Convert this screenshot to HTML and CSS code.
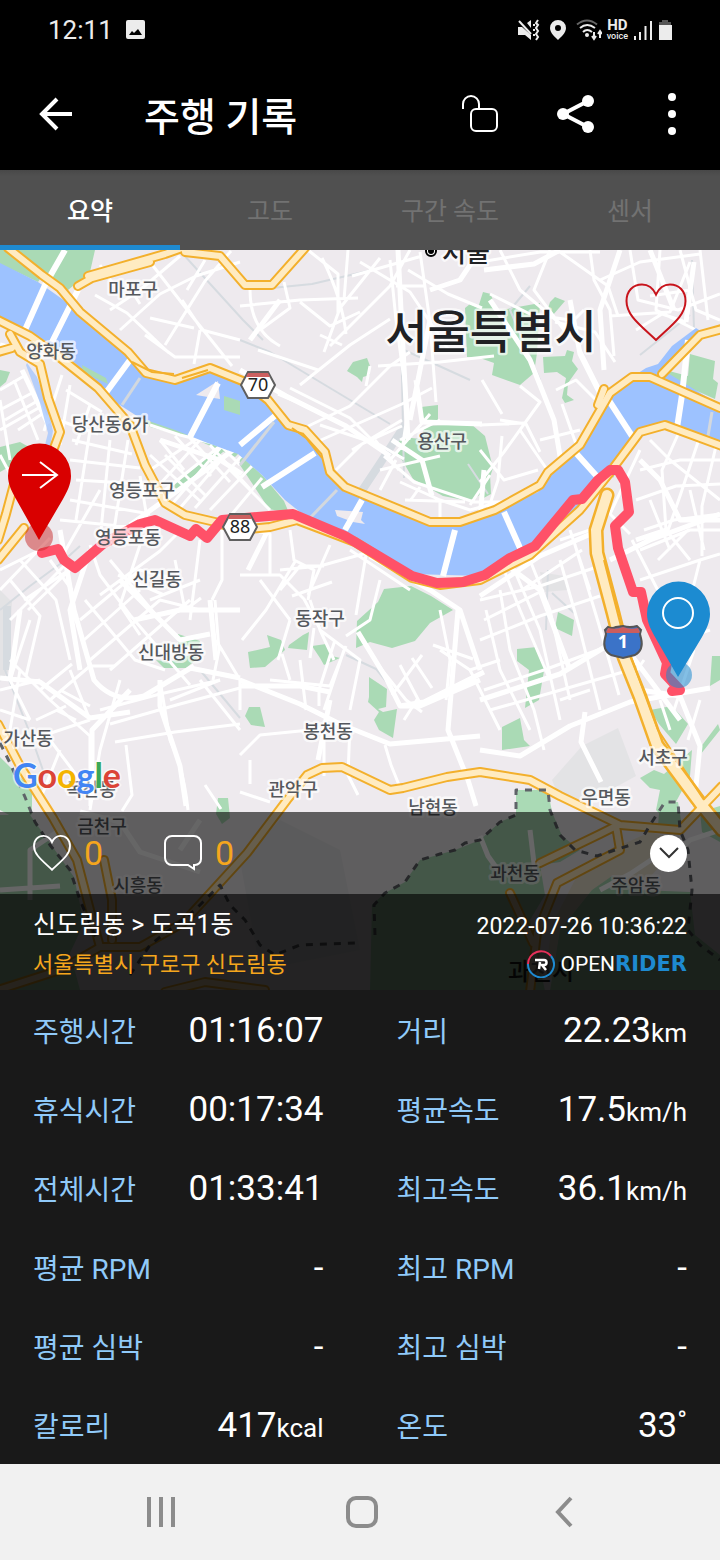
FILE: index.html
```html
<!DOCTYPE html>
<html lang="ko">
<head>
    <meta charset="UTF-8">
    <meta name="viewport" content="width=device-width, initial-scale=1.0">
    <title>주행 기록</title>
    <link rel="stylesheet" href="styles.css">
</head>
<body>
    <div class="status-bar">
        <span class="clock">12:11</span>
        <svg class="photo-icon" width="20" height="20" viewBox="0 0 20 20"><rect x="0" y="0" width="19" height="19" rx="2" fill="#ececec"/><path d="M3 15l3-4 2 2 4-4 4 6z" fill="#000"/></svg>
        <div class="status-icons">
            <svg width="22" height="22" viewBox="0 0 22 22"><path d="M0 8h4l9 8v5l-6-5H0zM9 4l4-3v8z" fill="#ececec"/><path d="M1 2l12 13" stroke="#ececec" stroke-width="2"/><path d="M20 1l-2 3 2 2-2 3 2 3-2 3 2 3-2 3M16 5v2M16 10v2M16 15v2" stroke="#ececec" stroke-width="2" fill="none"/></svg>
            <svg width="16" height="22" viewBox="0 0 16 22"><path fill-rule="evenodd" d="M8 1a8 8 0 0 0-8 8c0 5 5 9 8 12 3-3 8-7 8-12a8 8 0 0 0-8-8zm0 5a3 3 0 1 1 0 6 3 3 0 0 1 0-6z" fill="#ececec"/></svg>
            <svg width="26" height="22" viewBox="0 0 26 22"><g fill="none" stroke-width="2"><path d="M1 5.500q10-8 20 0" stroke="#666"/><path d="M4 9q7-6 15 0M7 13q4-4 9 0" stroke="#ececec"/><path d="M18 13v7m-2-3l2 3 2-3M24 19v-7m-2 3l2-3 2 3" stroke="#ececec"/></g><circle cx="11" cy="16" r="2" fill="#ececec"/></svg>
            <div class="hd"><span>HD</span><small>voice</small></div>
            <svg width="20" height="22" viewBox="0 0 20 22"><path d="M2 17v4M7 13v8M12.500 7v14M18 2v19" stroke="#ececec" stroke-width="2"/></svg>
            <svg width="14" height="22" viewBox="0 0 14 22"><path d="M4 1h6v2h3v4H1V3h3z" fill="#555"/><path d="M1 6h13v15H1z" fill="#ececec"/></svg>
        </div>
    </div>

    <header class="app-bar">
        <button class="back" aria-label="뒤로">
            <svg width="34" height="34" viewBox="0 0 34 34" fill="none" stroke="#fff" stroke-width="4"><path d="M33 17H4M18 2L3 17l15 15"/></svg>
        </button>
        <h1>주행 기록</h1>
        <button class="action" aria-label="잠금 해제">
            <svg width="38" height="38" viewBox="0 0 38 38" fill="none" stroke="#fff" stroke-width="2"><path d="M2 14V9a8 8 0 0 1 16 0v5"/><rect x="10" y="14" width="26" height="22" rx="5"/></svg>
        </button>
        <button class="action" aria-label="공유">
            <svg width="40" height="40" viewBox="0 0 40 40" fill="#fff"><path d="M32 7L7 20l25 13" fill="none" stroke="#fff" stroke-width="4"/><circle cx="7" cy="20" r="6"/><circle cx="32" cy="7" r="6"/><circle cx="32" cy="33" r="6"/></svg>
        </button>
        <button class="action" aria-label="더보기">
            <svg width="10" height="44" viewBox="0 0 10 44" fill="#fff"><circle cx="5" cy="5" r="4"/><circle cx="5" cy="22" r="4"/><circle cx="5" cy="39" r="4"/></svg>
        </button>
    </header>

    <nav class="tabs">
        <button class="tab active">요약</button>
        <button class="tab">고도</button>
        <button class="tab">구간 속도</button>
        <button class="tab">센서</button>
    </nav>

    <main>
        <section class="stage">
            <svg class="map" viewBox="0 250 720 740" role="img" aria-label="주행 경로 지도">
                <rect class="land" y="250" width="720" height="740"/>

                <!-- airport, campus and base areas -->
                <g class="area">
                    <path d="M552 780l30-34 36-18 18 48-40 22-36 2zM540 572l24 4 4 14-24 2zM0 590l12 12-4 70-8 10z"/>
                    <path d="M400 900l20-20 40 10-20 60-50 30zM240 860l40-40 60 30 20 100-100 20z"/>
                    <path class="sand" d="M610 850l40-18 14 4-4 30-20 22-30 0-26 24 4 60-30 20-12-24 6-44 24-46z"/>
                </g>

                <!-- parks -->
                <g class="park">
                    <path d="M8 250H95L90 272 68 290 42 276 38 282 0 264V250z"/>
                    <path d="M347 371l6-9 14-4 3 8v9l-7 2-1 5-5-5zM421 407l17-2v15h-17z"/>
                    <path d="M425 426l46-2 14 12 8 32-8 24-16 9-26-5-30-17-8-14-8-13 5-4-5-6 7-5 16 2z"/>
                    <path d="M465 308l5-4 8 4 5-16 8 2 5 17 44-8-3 50-3 20-14 12-28-10 2-12-14-5-13-1zM550 302l5-5 10 4-12 14-6-3z"/>
                    <path d="M543 357l22-1 2-6 7 2-2 9 6 8-10 14-1 12 7 5-9 3-3-5 4-20-9-6-13 1z"/>
                    <path d="M690 354l25 7-2 18 5 4-3 16-52-23 6-5 19 5zM607 466l18-10-12 22z"/>
                    <path d="M480 434l9 20 2 40-11 6z"/>
                    <path d="M140 415l40 16 40 7 20 14-5 5-40-18-45-12zM173 486l46-38 4 4-46 38zM0 370l10 2-4 10-6 5zM0 447l20-5 18 10-20 10-18 10zM240 455l24 22 20 24 5 12-20-4-29-44z"/>
                    <path d="M178 634l22 7-2 8-20-5zM156 660l14 2 20-7 8 3-12 10-22 0zM0 757l32 32 0 25-10 8-22-12z"/>
                    <path d="M357 621l21-19 6-13 27-3 20 10 22 14-23 13-15 18-23 7-22-6-14 6z"/>
                    <path d="M248 652l22-5-3-12 14 5 4 10-20 17-15 1zM289 645l14-10 6-3-2 18-19-2zM312 646l14-2 6 12 8 2-16 7-4-7zM245 716l4-9h11l5 20-14-2zM369 677l18 12-1 18-8 2 5 3 14-3-4 29-14-8-5-10 5-8-11-10 1-5z"/>
                    <path d="M558 612l16 8-2 16-17-8zM517 649l20-2 2 8 6 10-6 35-14 8 4-38-12-9zM502 727l18-9 4 22 6 6-28 4z"/>
                    <path d="M650 710l22-4 16 18-12 20-17-20zM640 778l14-8 10 4 28-24-2 26-24 44-10-10 4-20-10-2zM712 656l8 0v24l-10 6zM700 748l18-24 2 6-20 25z"/>
                    <path d="M218 798h10l2 20-8 6-6-10z"/>
                    <path d="M516 790H548L552 812 562 836 580 850 560 862 540 865 545 895 530 920 545 991H370L372 905 385 893 405 882 420 860 455 850 480 840 500 822 516 815z"/>
                    <path d="M592 890L612 876 640 890 690 892 695 935 720 955V991H550L560 930z"/>
                    <path d="M660 802h18l4 24h-24zM0 815l30 0 44 62 10 46-14 30 10 37H0zM700 812l20-6v36l-18-10z"/>
                </g>

                <!-- rail lines -->
                <g class="rail">
                    <path d="M183 254l60 66 20 20M272 288l40-4 60-14M240 340l30 12 60 36 60 36M488 494l-20-30M470 380l-66-30M400 278l4 200"/>
                    <path d="M0 610l30-24 30-22 20-18M5 612v58l26 66 14 40M346 655l30 14 16 20M540 380l-30-70 20-24M548 570l-2 60M552 593l22 20M692 260l2 70M640 355l50-40M200 670l40 48"/>
                    <path class="yard" d="M405 425l-26 40-20 30M7 606v64"/>
                </g>

                <!-- local streets -->
                <g class="minor">
                    <path d="M150 262l42 54 40 50M110 310l30-20 40-34M95 295l32 18 42 40M120 330l40-36 36-18 44-14M165 345l40-64 26-30M182 300l20 30 38 10M200 330l-6 34M150 318l44 10M126 282l14 22M205 260l-18 30M145 335l30 22 65 0M100 265l14 20"/>
                    <path d="M250 290q0 40 30 56M240 306l60-6 58-2M260 330l30-22-6-26M322 258q20 40 24 76M300 302l30 24 30-14M348 250l-4 50M380 258l-40 50-16 44M360 262l50 30 40 60M352 276l70-20M330 346l60-60 20-36M258 350l60 20M300 385l50-40 40-26M370 366l-4 20M378 366l62-4 54-6M390 260l6 60 12 90-6 40M420 252l10 70 6 80M308 250l30 24 0 40M396 286l30 0M408 270l40 24 34 14M320 335l22 10"/>
                    <path d="M290 388l60 30 40 40M300 430l50-24 40-40 20-14M312 444l90-40 30-16M320 425l60 20 24 14M336 470l26-26 40-18M278 394l24 10M352 450l50-30M400 440l40-20M390 460l40-46M380 470l60-14M375 440l24 30"/>
                    <path d="M384 456l30 26 60 20 30 0M400 482l40 18 30 10 30-8M420 487l-10 14M440 502v18M396 460l-16 30M405 500l60 2M470 505l20-30"/>
                    <path d="M480 262l60-10 60 0M500 250l20 40 60 50M550 250l-16 40 30 40 20-20M490 294l40 20 40 6M560 252l48 34 10 30M590 250l4 30 16 30 4 46M600 280l40-18 60-8M630 250l8 50 40 10 42-16M660 250l-4 60 40 20M680 250l16 60 24 10M610 316l60-4 20-50M690 290l-40 6M700 250l8 70M555 322l40 10 20 30M520 386l20 16-36 50-24 30M500 420l26 4 14 28M480 425l44-2M482 380l20 34M562 404l14 40M580 350l30 60M556 390l20-10 20 20M540 440l40-10M480 450l24 30 34-10M520 430l26 38M488 510l10-30 4-44M636 330l26-16 24 8"/>
                    <path d="M640 450l-30 64 20 20M650 440l20 20 50 40M680 430l-18 40 4 60 24 30M700 436l-20 60-14 40M716 446l-14 60 0 50M640 470l40-10 40 0M636 500l40-14 44-2M644 530l30-10 46-6M640 550l50-20M650 500l20 50M632 540l36 70M658 560l30-30 32 0M640 580l60-20 20-6M700 560l-10 40M690 490l14 60"/>
                    <path d="M0 390l24-14M0 410l32-17M5 420l34-20M0 430l42-24M14 380l24 60M0 400l10 60M18 430l24-16M62 375l-18 56M70 385l-10 60M90 405l-14 40M66 390l36 22M58 420l40 14M72 440l60 14M70 460l70 8M76 480l66 4M90 430l-14 90M110 440l-10 100M128 440l-14 90M70 500l80 14M60 520l100 10M140 476l10 60M60 560l40-70M0 455l16 30"/>
                    <path d="M150 425l30 10 40 10 20 20M150 470l90-60M165 490l80-64M180 508l60-70M160 440l24 30M175 436l36 40M190 438l40 44M210 445l40 44M165 455l40 40M150 455l50 46M200 440l-40 44M222 446l-50 58M245 452l-50 56M252 466l-42 44M262 478l-30 36M230 470l40 40"/>
                    <path d="M0 590l50-52M10 620l60-60M0 570l40-20M28 610l48-46M20 560l36 40 14 60M50 560l22 30M10 580l30 36-14 60M24 600l90-60M90 545l10 30 30 40 60 70M100 595l60-44 20-20M80 620l60-50 40 10M84 640l56-50M90 660l70-60 40 10M110 670l80-70M85 600l50 60 30 10M110 560l50 60M118 575l46 20M140 545l-20 60 20 30M150 600l50-20M175 560l10 50 16-12M200 540l-10 80M222 530l0 50-10 20M215 600l4 50-6 30M170 700l50-20M216 640l24 40 0 30"/>
                    <path d="M10 660l40 40 40 36 0 70M0 690l40-10M20 670l-10 60M30 620l-20 60 20 40M0 710l30 10M36 720l30-14M50 700l40-34 24 0M60 690l30 16M56 710l20 10M70 670l20 50M40 690l32-26M30 740l60-20M50 740l30 40M100 710l60-16 60-14M110 724l70-20 60-16M115 742l60-10 65-8M120 680l-20 70-10 60M126 745l6 50-10 16M160 680l10 60q14 30 18 70M200 680l40 50M60 750l-20 50 20 20M205 785l16 24"/>
                    <path d="M250 530l20 4v40M290 530l4 30 20 10-6 30M330 545l-22 50M280 570l40-4 50-14M296 560l-30 50-24 30M260 580l30 40M240 575l40 0 24 24 16 30M280 590l20-24 24 0M310 600l10 30 14 30M332 582l-40 14M366 555l-10 60M350 550l60 40M380 580l-10 40-24 16M320 630l40 30-10 50M290 620l-12 40M314 628l-4 30M335 640l-16 50 0 16M362 640l20 30 24 30 16 12M290 680l-8-26M270 680l60 6 16-40M300 660l6 50M344 650l-20 60M400 665l20 38M412 658l20 30M422 655l-30 40M404 720l14-22M440 610l10 50-4 40M440 650l30 20 30-10M433 645l40 14M240 755l20-20 60-6M350 725l-2 50 10 20M385 745l6 20 8 20M324 736l0 40M250 760l0 24M240 792l30 10"/>
                    <path d="M480 600l60-14 60-20M484 620l60-30M480 640l60-24 60-20M484 690l60-20 70-26M490 710l50-14 90-26M500 560l20 50 30 70M510 560l30 70 20 90M530 560l20 50 20 90M560 560l20 70 20 80M575 545l24 80 20 70M500 590l10 60 24 60 10 40M486 610l14 60 30 60M570 530l20 60M560 540l30-10M582 550l-60 40M470 670l30 60M560 700l30-10M630 680l14-20M680 640l30-10M694 650l-20 60M700 700l-12 40M660 700l10 30"/>
                </g>
                <g class="major">
                    <path d="M240 370l46 26 60 30 44 30M280 300l-30 40M398 250l4 80 6 110M430 320l-14 70-6 30M392 440l30 20 10 36M416 380l6 42 60 2M480 250l-20 30-30 10"/>
                    <path d="M484 270l50-6 26-14M490 300l40 60 24 60 10 60M570 300l10 54 20 40M620 250l-20 60 4 60M480 520l4-50M650 250l24 60M694 262l-8 60"/>
                    <path d="M60 530l14 80 20 70q20 24 50 16l50-30M0 678l40 4 50 36 40-6M20 610l-10 70M90 550l-20 60 10 60M130 690l-38 40 0 70M120 580l60 60 30-6M134 620l46-10 60 0M160 680l0 26 20 60 6 40M210 600l6 60M190 668l50 10"/>
                    <path d="M240 680l60 24 40 20 50 20 90-8M240 686l60 0 30 6M330 700l-12 60M358 632l28 46 14 28 24 -4M370 556l60 34 30 20 20 60M458 610l-10 120 20 50 8 26M424 702l60-30M268 530l-20 40M400 706l20 0 60-26"/>
                    <path d="M600 530l-60 26-60 40M480 700l80-26 50-30M480 750l40 6 50-30 60-24 80-14M500 560l40 30 30 80M640 690l40 6 20 50-6 60M610 560l40-20 70-26M636 540l30-10M585 712l-4 30 20 40M620 640l60 80M700 600l-50 16"/>
                    <path d="M480 836l8 20 10 14M530 830l6 50M600 890l30-16 30-20M660 870l30-30 30-10M80 812l40 10 20 30 60 20M30 900l0-50 30-20M0 890l60-4M180 850l20-30"/>
                    <path d="M240 445l-60 44-50 36M0 345l30 8M22 370l26 54M160 440l60 20 22 14M640 460l20 20 20 40 40 0"/>
                </g>

                <!-- Han river -->
                <path class="water" d="M0 263L38 282 58 296 80 312 128 352 148 376 178 382 212 368 245 384 268 400 288 425 305 430 325 452 330 472 345 487 430 524 475 520 538 492 552 470 582 444 610 396 632 377 646 368 658 364 672 346 696 328 702 332 666 372 720 405V444L665 425 640 428 612 468 580 505 528 552 480 576 412 574 350 540 300 512 285 500 262 475 238 454 205 442 175 430 140 418 112 400 76 364 50 343 0 320z"/>
                <path class="water" d="M27 363l10 14 10 28 6 26-3 16-6 2 4-16-8-30-14-38z" fill-opacity=".7"/>
                <path class="park" d="M82 365l24 13 2 6-25-12zM224 396l16 5v14l-16-5z"/>
                <path class="land" d="M196 395l22-14 2 18zM335 510l28 2-2 8 4 4-12-2-16-6z"/>

                <!-- bridges -->
                <g class="bridge">
                    <path d="M65 250L45 285 25 330M78 290L52 342M130 360L105 394M218 383L190 437M282 410L240 445M315 453L262 487M362 500L345 530M455 530L443 576M504 512L520 548M575 452L602 482M606 396L632 436M688 340L682 395 677 428"/>
                    <path class="rail-bridge" d="M140 378L122 405M274 422L240 465M337 490L310 518M712 412L708 436"/>
                </g>

                <!-- expressways: casing, then fill -->
                <g class="casing">
                    <path d="M8 248L42 275 60 288 80 312 128 352 146 373 175 380 210 368 245 382 268 400 288 425 305 430 325 452 330 472 345 487 430 522 460 522 495 510 540 485 548 472 580 445 610 393 632 377 650 377 720 408"/>
                    <path d="M662 374L700 335 722 329M598 405l6-16"/>
                    <path d="M88 276L165 254 182 248M78 286L92 278 150 262M185 252L220 256 245 285 272 285 305 248"/>
                    <path d="M-2 320L30 336 58 356 98 388 130 425 145 465 165 503 185 515 215 522 240 530 270 527 297 520 355 542 412 578 440 585 480 580 530 555 580 510 608 475 640 432 665 425 722 446"/>
                    <path d="M10 334l10 18 20 12 8 34 12 34-6 16M-2 352l14-4M14 484l-8 30-8 26M24 528L-2 560"/>
                    <path class="wide" d="M607 495L596 530 597 553 613 613 624 657 640 697 657 745 703 807 722 830"/>
                    <path d="M-2 724L20 766 53 818 77 860 90 910 100 947 140 947 183 923 247 853 287 800 307 775 322 768 342 767 390 790 403 788 447 777 480 772 530 780 560 796 620 825 680 830 722 786"/>
                    <path d="M540 863L600 834 616 826 620 850 557 883 537 933 530 992M510 893l23 50M100 947L60 970-2 990M104 860l8 40 0 40M165 992l40-10 60 8"/>
                </g>
                <g class="filling">
                    <path d="M8 248L42 275 60 288 80 312 128 352 146 373 175 380 210 368 245 382 268 400 288 425 305 430 325 452 330 472 345 487 430 522 460 522 495 510 540 485 548 472 580 445 610 393 632 377 650 377 720 408"/>
                    <path d="M662 374L700 335 722 329M598 405l6-16"/>
                    <path d="M88 276L165 254 182 248M78 286L92 278 150 262M185 252L220 256 245 285 272 285 305 248"/>
                    <path d="M-2 320L30 336 58 356 98 388 130 425 145 465 165 503 185 515 215 522 240 530 270 527 297 520 355 542 412 578 440 585 480 580 530 555 580 510 608 475 640 432 665 425 722 446"/>
                    <path d="M10 334l10 18 20 12 8 34 12 34-6 16M-2 352l14-4M14 484l-8 30-8 26M24 528L-2 560"/>
                    <path class="wide" d="M607 495L596 530 597 553 613 613 624 657 640 697 657 745 703 807 722 830"/>
                    <path d="M-2 724L20 766 53 818 77 860 90 910 100 947 140 947 183 923 247 853 287 800 307 775 322 768 342 767 390 790 403 788 447 777 480 772 530 780 560 796 620 825 680 830 722 786"/>
                    <path d="M540 863L600 834 616 826 620 850 557 883 537 933 530 992M510 893l23 50M100 947L60 970-2 990M104 860l8 40 0 40M165 992l40-10 60 8"/>
                </g>
                <path class="median" d="M132 362l20 10 22 2M182 378l26-8M292 428l14 10 16 20M604 560l20 78 34 92 46 70"/>

                <!-- district borders -->
                <g class="border">
                    <path d="M0 743L10 763 25 797 35 822 50 845 70 870 80 900 97 940M130 975L150 945 195 910 220 885 230 905 245 920 260 945 275 955 300 945 355 943"/>
                    <path d="M375 935L374 905 385 893 405 882 420 860 440 854 455 850 465 843 480 840 500 822 516 815V790H548L550 810 560 835 575 850 597 856 615 850 640 842 650 825 665 802H678L680 830 688 850 692 890 688 930 700 945 720 960"/>
                </g>

                <!-- ridden route -->
                <path class="route" d="M42 553L58 549 64 560 75 568 103 544 140 524 155 520 190 536 196 529 207 538 222 520 293 514 345 536 412 576 437 583 463 582 485 575 510 558 535 546 573 500 582 499 598 480 610 470H618L625 482 629 512 615 526 618 548 633 592 641 592 647 620 667 663 665 674 680 690 672 691"/>

                <!-- place labels -->
                <g class="labels">
                    <text x="133" y="296">마포구</text>
                    <text x="51" y="358">양화동</text>
                    <text x="110" y="431">당산동6가</text>
                    <text x="142" y="497">영등포구</text>
                    <text x="128" y="544">영등포동</text>
                    <text x="157" y="586">신길동</text>
                    <text x="171" y="659">신대방동</text>
                    <text x="442" y="448">용산구</text>
                    <text x="320" y="625">동작구</text>
                    <text x="328" y="738">봉천동</text>
                    <text x="293" y="796">관악구</text>
                    <text x="433" y="814">남현동</text>
                    <text x="663" y="764">서초구</text>
                    <text x="606" y="804">우면동</text>
                    <text x="28" y="745">가산동</text>
                    <text x="91" y="796">독산동</text>
                    <text x="102" y="833">금천구</text>
                    <text x="138" y="892">시흥동</text>
                    <text x="515" y="880">과천동</text>
                    <text x="636" y="892">주암동</text>
                    <text class="town" x="541" y="980">과천시</text>
                    <text class="capital" x="466" y="262">서울</text>
                    <text class="city" x="491" y="348">서울특별시</text>
                </g>
                <circle cx="431" cy="251" r="5" fill="#fff" stroke="#000" stroke-width="2"/>
                <circle cx="431" cy="251" r="3"/>

                <!-- road shields -->
                <g class="shield">
                    <path d="M248 372h20l7 13-7 13h-20l-7-13z"/><path class="top" d="M248 373h20l2 4h-24z"/>
                    <text x="258" y="391">70</text>
                    <path d="M230 514h20l7 13-7 13h-20l-7-13z"/><path class="top" d="M230 515h20l2 4h-24z"/>
                    <text x="240" y="533">88</text>
                </g>
                <path d="M608 627q4 2 8 0 7-1 7-1 7 2 14 0l4 4q-2 4 0 8 3 12-6 17l-12 3-12-3q-9-5-6-17 2-4 0-8z" fill="#3b73c8" stroke="#555" stroke-width="2"/>
                <path d="M608 628q8 2 15-1 7 3 15 1l2 4-1 1h-32l-1-1z" fill="#cc5d5d"/>
                <text class="shield-one" x="623" y="648">1</text>

                <!-- start and finish pins -->
                <circle cx="39" cy="537" r="14" fill="#c82828" fill-opacity=".5"/>
                <path d="M8 476a31 32 0 0 1 63 0c0 8-4 16-8 23L39 540 16 499c-4-7-8-15-8-23z" fill="#d90000"/>
                <path d="M22 475h35M40 462l17 13-17 13" fill="none" stroke="#fff" stroke-width="2"/>
                <circle cx="679" cy="675" r="13" fill="#1e8ad0" fill-opacity=".55"/>
                <path d="M647 614a31 32 0 0 1 63 0c0 8-4 16-8 23l-24 40-23-40c-4-7-8-15-8-23z" fill="#1c8bd1"/>
                <circle cx="678" cy="613" r="15" fill="none" stroke="#fff" stroke-width="2"/>

                <text class="google" x="13" y="788"><tspan fill="#4285f4">G</tspan><tspan fill="#db4437">o</tspan><tspan fill="#f4b400">o</tspan><tspan fill="#4285f4">g</tspan><tspan fill="#3ba757">l</tspan><tspan fill="#db4437">e</tspan></text>
            </svg>

            <button class="favorite" aria-label="즐겨찾기">
                <svg width="62" height="59" viewBox="0 0 62 59" fill="none" stroke="#c8141c" stroke-width="2"><path d="M31 11.500C28 5 23 1.500 17 1.500 8 1.500 1.500 8 1.500 18c0 14 12.500 23 29.500 39C48 41 60.500 32 60.500 18 60.500 8 54 1.500 45 1.500 39 1.500 34 5 31 11.500z"/></svg>
            </button>

            <div class="overlay">
                <div class="reactions">
                    <button class="reaction">
                        <svg width="38" height="36" viewBox="0 0 62 59" fill="none" stroke="#fff" stroke-width="3"><path d="M31 11.500C28 5 23 1.500 17 1.500 8 1.500 1.500 8 1.500 18c0 14 12.500 23 29.500 39C48 41 60.500 32 60.500 18 60.500 8 54 1.500 45 1.500 39 1.500 34 5 31 11.500z"/></svg>
                        <span>0</span>
                    </button>
                    <button class="reaction">
                        <svg width="38" height="36" viewBox="0 0 38 36" fill="none" stroke="#fff" stroke-width="2"><path d="M8 1h22a7 7 0 0 1 7 7v16a6 6 0 0 1-6 6h-1v4l-6-4H8a7 7 0 0 1-7-7V8a7 7 0 0 1 7-7z"/></svg>
                        <span>0</span>
                    </button>
                    <button class="collapse" aria-label="접기">
                        <svg width="20" height="12" viewBox="0 0 20 12" fill="none" stroke="#333" stroke-width="2"><path d="M1 1l9 9 9-9"/></svg>
                    </button>
                </div>
                <div class="ride">
                    <div>
                        <h2>신도림동 &gt; 도곡1동</h2>
                        <p class="address">서울특별시 구로구 신도림동</p>
                    </div>
                    <div class="ride-meta">
                        <time datetime="2022-07-26T10:36:22">2022-07-26 10:36:22</time>
                        <div class="brand">
                            <svg width="28" height="28" viewBox="0 0 28 28" fill="none"><circle cx="14" cy="14" r="13" fill="#191919" fill-opacity=".5"/><path d="M1 14a13 13 0 0 1 23-8" stroke="#e8305a" stroke-width="2"/><path d="M24 6a13 13 0 1 1-23 8" stroke="#1e8ad0" stroke-width="2"/><path d="M8 10h9a2.500 2.500 0 0 1 0 5h-2l4 5M13 12l-1 7" stroke="#fff" stroke-width="2.500"/></svg>
                            <span class="open">OPEN</span><b>RIDER</b>
                        </div>
                    </div>
                </div>
            </div>
        </section>

        <dl class="stats">
            <div><dt>주행시간</dt><dd>01:16:07</dd></div>
            <div><dt>거리</dt><dd>22.23<small>km</small></dd></div>
            <div><dt>휴식시간</dt><dd>00:17:34</dd></div>
            <div><dt>평균속도</dt><dd>17.5<small>km/h</small></dd></div>
            <div><dt>전체시간</dt><dd>01:33:41</dd></div>
            <div><dt>최고속도</dt><dd>36.1<small>km/h</small></dd></div>
            <div><dt>평균 RPM</dt><dd>-</dd></div>
            <div><dt>최고 RPM</dt><dd>-</dd></div>
            <div><dt>평균 심박</dt><dd>-</dd></div>
            <div><dt>최고 심박</dt><dd>-</dd></div>
            <div><dt>칼로리</dt><dd>417<small>kcal</small></dd></div>
            <div><dt>온도</dt><dd>33<small class="degree">°</small></dd></div>
        </dl>
    </main>

    <footer class="nav-bar">
        <button aria-label="최근 앱"><svg width="30" height="32" viewBox="0 0 30 32" stroke="#8c8c8c" stroke-width="4"><path d="M3 1v30M15 1v30M27 1v30"/></svg></button>
        <button aria-label="홈"><svg width="32" height="32" viewBox="0 0 32 32" fill="none" stroke="#8c8c8c" stroke-width="4"><rect x="2" y="2" width="28" height="28" rx="8"/></svg></button>
        <button aria-label="뒤로 가기"><svg width="20" height="32" viewBox="0 0 20 32" fill="none" stroke="#8c8c8c" stroke-width="4"><path d="M18 2L5 16l13 14"/></svg></button>
    </footer>
</body>
</html>
```

FILE: styles.css
```css
* { margin: 0; padding: 0; box-sizing: border-box; }
body { background-color: #191919; color: white; font-family: Roboto, "Noto Sans CJK KR", sans-serif; }
button { background: none; border: none; color: inherit; font-family: inherit; cursor: pointer;
         display: flex; align-items: center; justify-content: center; }
svg { display: block; flex: none; }

/* status bar */
.status-bar { display: flex; align-items: center; height: 60px; padding: 0 48px; background: black; color: #ececec; }
.clock { font-size: 26px; }
.photo-icon { margin-left: 13px; }
.status-icons { display: flex; align-items: center; gap: 5px; margin-left: auto; }
.status-icons svg:first-child { margin-right: 5px; }
.status-icons svg:nth-child(2) { margin-right: 5px; }
.hd { display: flex; flex-direction: column; align-items: center; font-size: 15px; line-height: 12px; font-weight: bold; }
.hd small { font-size: 9px; line-height: 10px; font-weight: 500; }

/* title bar */
.app-bar { display: flex; align-items: center; height: 110px; padding-bottom: 2px; background: black; }
.back { width: 112px; height: 96px; }
.app-bar h1 { flex: 1; padding-left: 32px; font-size: 39px; font-weight: 500; }
.action { width: 96px; height: 96px; }

.tabs { display: grid; grid-template-columns: repeat(4, 1fr); height: 80px;
        background: linear-gradient(#484848, #505050 6px); }
.tab { color: #727272; font-size: 25px; border-bottom: 5px solid transparent; padding-top: 2px; }
.tab.active { color: white; font-weight: 500; border-color: #1e8ad0; }

/* map */
.stage { position: relative; display: grid; overflow: hidden; }
.stage > * { grid-area: 1 / 1; }
.map { width: 100%; height: auto; }
.land { fill: #eeeaee; }
.area { fill: #e3e3e5; }
.area .sand { fill: #ece3d0; }
.park { fill: #aadab5; }
.water { fill: #9dc2ff; }
.rail, .minor, .major, .bridge, .casing, .filling, .border { fill: none; stroke-linejoin: round; }
.rail { stroke: #d6dbe0; stroke-width: 2; }
.rail .yard { stroke-width: 8; }
.minor { stroke: white; stroke-width: 3; }
.major { stroke: white; stroke-width: 5; }
.bridge { stroke: white; stroke-width: 6; }
.rail-bridge { stroke: #d3d8de; stroke-width: 3; }
.casing { stroke: #f3b02c; stroke-width: 10; stroke-linecap: round; }
.casing .wide { stroke-width: 15; }
.filling { stroke: #ffebc1; stroke-width: 6; stroke-linecap: round; }
.filling .wide { stroke-width: 10; }
.median { fill: none; stroke: #f3b02c; stroke-width: 2; }
.border { stroke: #5f6368; stroke-width: 3; stroke-dasharray: 7 7; }
.route { fill: none; stroke: #ff5168; stroke-width: 10; stroke-linejoin: round; stroke-linecap: round; }

.labels { font-size: 18px; font-weight: 500; text-anchor: middle; fill: #55585d; paint-order: stroke;
          stroke: rgba(255, 255, 255, .7); stroke-width: 5px; stroke-linejoin: round; }
.labels .town { font-size: 24px; fill: #222; stroke: none; }
.labels .capital { font-size: 26px; fill: #202124; }
.labels .city { font-size: 46px; fill: #202124; }
.shield { fill: white; stroke: #5f5f5f; stroke-width: 2; }
.shield .top { fill: #cc6060; stroke: none; }
.shield text { fill: #222; stroke: none; font-size: 18px; text-anchor: middle; font-family: "Noto Sans", sans-serif; }
.shield-one { fill: white; font: bold 18px "Noto Sans", sans-serif; text-anchor: middle; }
.google { font: bold 34px Lato, sans-serif; paint-order: stroke; stroke: rgba(255, 255, 255, .6); stroke-width: 3px; }

.favorite { position: absolute; top: 33px; right: 33px; }

/* ride info over the map */
.overlay { align-self: end; background: rgba(0, 0, 0, .6); }
.reactions { display: flex; align-items: center; gap: 61px; height: 82px; padding: 0 33px; }
.reaction { gap: 13px; color: #f5a61d; font-size: 34px; }
.collapse { width: 37px; height: 37px; margin-left: auto; border-radius: 50%; background: white; }
.ride { display: flex; justify-content: space-between; height: 96px; padding: 12px 33px 0; background: rgba(0, 0, 0, .62); }
.ride h2 { font-size: 25px; line-height: 38px; font-weight: 400; }
.address { color: #f5a61d; font-size: 22px; line-height: 42px; }
.ride-meta { text-align: right; font-size: 24px; line-height: 40px; }
.ride-meta time { font-size: 23px; }
.brand { display: flex; align-items: center; justify-content: flex-end; height: 34px; font-size: 21px; }
.brand svg { margin-right: 5px; }
.brand b { color: #1e8ad0; font-family: "DejaVu Sans", sans-serif; }

/* numbers */
.stats { display: grid; grid-template-columns: 1fr 1fr; grid-auto-rows: 79px; column-gap: 73px; padding: 0 33px; }
.stats div { display: flex; align-items: center; justify-content: space-between; }
.stats dt { color: #90caf9; font-size: 28px; }
.stats dd { padding-top: 2px; font-size: 35px; }
.stats small { font-size: 26px; }
.stats .degree { vertical-align: top; }

.nav-bar { display: grid; grid-template-columns: repeat(3, 1fr); height: 96px; padding: 0 57px 0 60px; background: #f1f1f1; }
```
